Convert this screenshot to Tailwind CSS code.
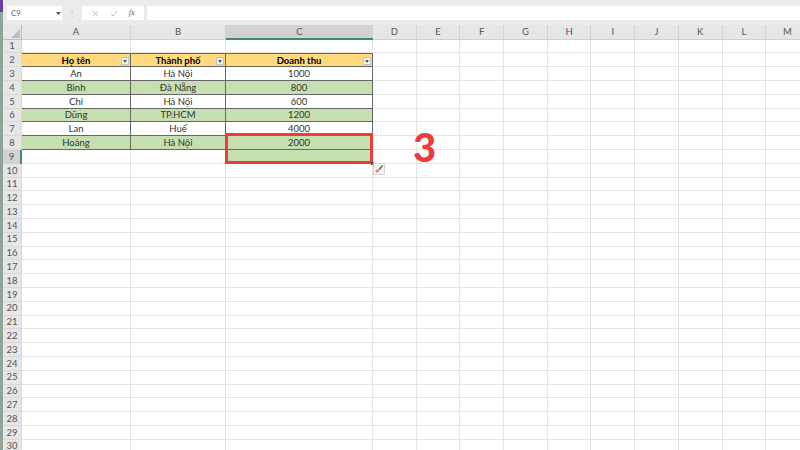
<!DOCTYPE html>
<html lang="en">
<head>
    <meta charset="UTF-8">
    <title>Excel</title>
    <script src="https://cdn.jsdelivr.net/npm/@tailwindcss/browser@4"></script>
</head>
<body class="w-[800px] h-[450px] overflow-hidden bg-white flex font-['Lato','Open_Sans',sans-serif] text-[#333]">
    <!-- window edge -->
    <div class="w-[3px] h-full bg-[#8fa398] shrink-0 flex flex-col">
        <div class="h-[12px] bg-[#6b3fa0]"></div>
    </div>

    <div class="flex-1 min-w-0 flex flex-col relative">
        <!-- formula bar -->
        <div class="h-[25px] shrink-0 bg-[#ebebeb] pt-[6px] flex items-start">
            <div class="w-[55px] h-[14px] bg-white ml-[4px] flex items-center justify-between pl-[4px] pr-[1px] text-[8px] text-[#666]">
                <span>C9</span>
                <svg width="5" height="3" viewBox="0 0 5 3"><path d="M0 0h5L2.500 3z" fill="#555"/></svg>
            </div>
            <div class="w-[20px] h-[14px] flex items-center justify-center text-[8px] text-[#aaa]">⋮</div>
            <div class="w-[62px] h-[14px] bg-white flex items-center justify-around px-[4px]">
                <svg width="7" height="7" viewBox="0 0 7 7"><path d="M1 1l5 5M6 1L1 6" stroke="#bbb" fill="none"/></svg>
                <svg width="8" height="7" viewBox="0 0 8 7"><path d="M1 4l2 2 4-5" stroke="#bbb" fill="none"/></svg>
                <span class="text-[8px] italic font-['Liberation_Serif',serif] text-[#666]">fx</span>
            </div>
            <div class="flex-1 h-[14px] ml-[3px] bg-white"></div>
        </div>

        <!-- sheet -->
        <div id="sheet" class="grid grid-cols-[19px_109px_95px_147px_repeat(10,43.7px)] grid-rows-[14.7px] auto-rows-[13.8px] text-[9.5px] leading-none"></div>

        <!-- selection box -->
        <div class="absolute left-[222px] top-[133px] w-[148px] h-[31px] border-[3px] border-[#f03a3a]"></div>
        <!-- fill handle and quick analysis -->
        <div class="absolute left-[368px] top-[162px] w-[3px] h-[3px] bg-[#555]"></div>
        <div class="absolute left-[370px] top-[163px] w-[12px] h-[12px] bg-[#f4f4f4] border border-[#d4d4d4] flex items-center justify-center">
            <svg width="10" height="10" viewBox="0 0 10 10"><path d="M1 7l3-2 1.500 1.500L3 9z" fill="#e8825a"/><path d="M4.500 5L8 1l1 1-3 4z" fill="#4f6f60"/></svg>
        </div>
        <!-- step number -->
        <div class="absolute left-[410px] top-[124px] text-[40px] leading-[46px] font-black text-[#f03a3a]">3</div>
    </div>

    <script>
        const columns = ['A', 'B', 'C', 'D', 'E', 'F', 'G', 'H', 'I', 'J', 'K', 'L', 'M'];
        const rows = {
            2: ['Họ tên', 'Thành phố', 'Doanh thu'],
            3: ['An', 'Hà Nội', '1000'],
            4: ['Bình', 'Đà Nẵng', '800'],
            5: ['Chi', 'Hà Nội', '600'],
            6: ['Dũng', 'TP.HCM', '1200'],
            7: ['Lan', 'Huế', '4000'],
            8: ['Hoàng', 'Hà Nội', '2000'],
        };
        const sheet = document.getElementById('sheet');

        function addCell(className, text) {
            const cell = document.createElement('div');
            cell.className = className;
            if (text) cell.textContent = text;
            sheet.appendChild(cell);
            return cell;
        }

        const filterButton = '<span class="absolute right-[1px] top-[3px] w-[8px] h-[8px] bg-[#f2f2f2] border border-[#c4c4c4] flex items-center justify-center"><svg width="4" height="3" viewBox="0 0 4 3"><path d="M0 0h4L2 3z" fill="#555"/></svg></span>';

        // header row
        const corner = addCell('bg-[#e6e6e6] border-b border-r border-[#bdbdbd] relative overflow-hidden');
        corner.innerHTML = '<svg class="absolute right-[1px] bottom-[1px]" width="9" height="9" viewBox="0 0 9 9"><path d="M9 0v9H0z" fill="#bdbdbd"/></svg>';
        columns.forEach(col => {
            addCell(col === 'C'
                ? 'bg-[#d2d2d2] border-b-2 border-[#3f8a5f] flex items-center justify-center text-[#555]'
                : 'bg-[#e6e6e6] border-b border-r border-[#d0d0d0] flex items-center justify-center text-[#555]', col);
        });

        for (let r = 1; r <= 30; r++) {
            addCell(r === 9
                ? 'bg-[#d2d2d2] border-r-2 border-[#3f8a5f] flex items-center justify-center text-[#555]'
                : 'bg-[#e6e6e6] border-b border-r border-[#d8d8d8] flex items-center justify-center text-[#555]', String(r));

            columns.forEach((col, i) => {
                const value = rows[r] ? rows[r][i] : undefined;
                if (r === 2 && i < 3) {
                    const cell = addCell('relative bg-[#ffd97d] border-y border-r border-[#666] flex items-center justify-center font-bold text-black', value);
                    cell.insertAdjacentHTML('beforeend', filterButton);
                } else if (rows[r] && i < 3) {
                    addCell((r % 2 === 0 ? 'bg-[#c6dfb1]' : 'bg-white') + ' border-b border-r border-[#666] flex items-center justify-center', value);
                } else if (r === 9 && col === 'C') {
                    addCell('bg-[#c6dfb1] border-r border-[#666]');
                } else {
                    addCell('border-b border-r border-[#e4e4e4]');
                }
            });
        }
    </script>
</body>
</html>
